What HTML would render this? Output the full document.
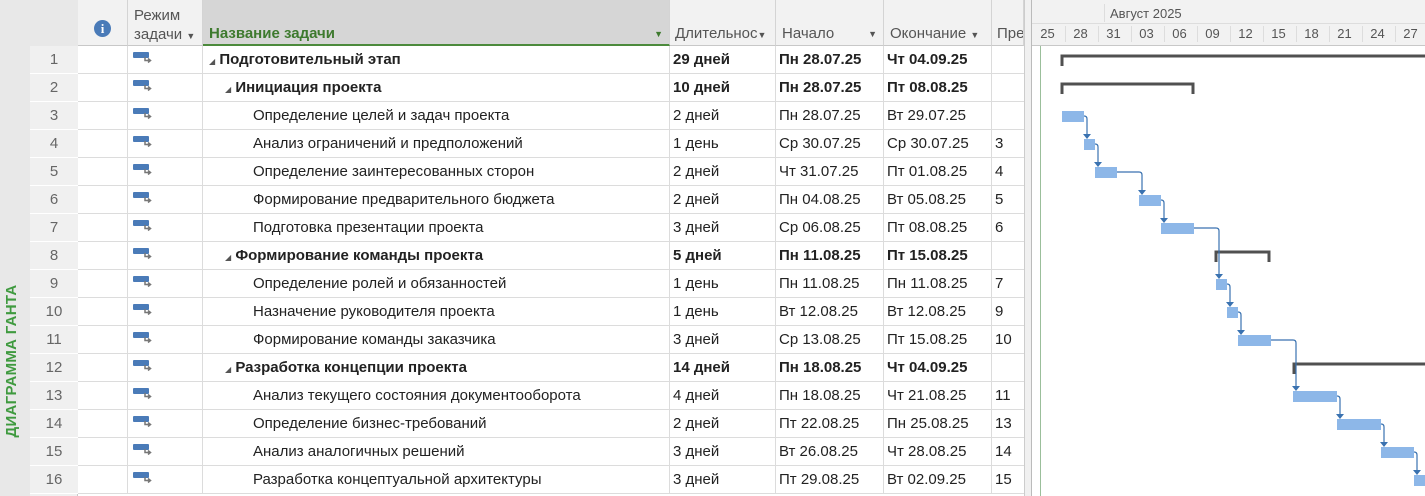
<!DOCTYPE html>
<html><head><meta charset="utf-8"><style>
*{margin:0;padding:0;box-sizing:border-box}
body{width:1425px;height:496px;overflow:hidden;background:#fff;font-family:"Liberation Sans","DejaVu Sans",sans-serif;font-size:15px;color:#222;position:relative}
.abs{position:absolute}
.hdr{position:absolute;top:0;height:46px;background:#f2f2f2;border-right:1px solid #d4d4d4;border-bottom:1px solid #c8c8c8;color:#555}
.row{position:absolute;left:78px;width:946px;height:28px;border-bottom:1px solid #dcdcdc}
.c{position:absolute;top:0;height:28px;line-height:27px;border-right:1px solid #dcdcdc;white-space:nowrap;overflow:hidden;padding-left:3px}
.b{font-weight:bold}
.num{position:absolute;left:30px;width:48px;height:28px;line-height:27px;text-align:center;color:#666;border-bottom:1px solid #fff;background:#f0f0f0}
.ico{position:absolute;left:133px}
</style></head><body>
<div class="abs" style="left:0;top:0;width:78px;height:496px;background:#e8e8e8"></div>
<div class="abs" style="left:30px;top:46px;width:48px;height:450px;background:#f0f0f0;border-right:1px solid #c8c8c8"></div>
<div class="abs" style="left:-66px;top:350px;width:160px;height:22px;transform:rotate(-90deg);color:#3f9a3f;font-weight:bold;font-size:15px;text-align:center;letter-spacing:0.3px">ДИАГРАММА ГАНТА</div>

<div class="hdr" style="left:78px;width:50px"><div class="abs" style="left:16px;top:20px;width:17px;height:17px;border-radius:50%;background:#4a7bb8;color:#fff;font-weight:bold;font-size:13px;text-align:center;line-height:17px;font-family:'Liberation Serif',serif">i</div></div>
<div class="hdr" style="left:128px;width:75px;padding:6px 0 0 6px;line-height:19px">Режим<br>задачи <span style="font-size:9px">▼</span></div>
<div class="hdr" style="left:203px;width:467px;background:#d6d6d6;border-bottom:2px solid #4c8a3c"><span class="abs" style="left:6px;top:25px;color:#3e7a2e;font-weight:bold">Название задачи</span><span class="abs" style="right:6px;top:29px;font-size:9px;color:#3e7a2e">▼</span></div>
<div class="hdr" style="left:670px;width:106px"><span class="abs" style="left:5px;top:25px">Длительнос<span style="font-size:9px">▼</span></span></div>
<div class="hdr" style="left:776px;width:108px"><span class="abs" style="left:6px;top:25px">Начало</span><span class="abs" style="right:6px;top:29px;font-size:9px">▼</span></div>
<div class="hdr" style="left:884px;width:108px"><span class="abs" style="left:6px;top:25px">Окончание <span style="font-size:9px">▼</span></span></div>
<div class="hdr" style="left:992px;width:32px;overflow:hidden"><span class="abs" style="left:5px;top:25px">Пре</span></div>
<div class="abs" style="left:1024px;top:0;width:8px;height:496px;background:#f0f0f0;border-left:1px solid #ccc;border-right:1px solid #bbb"></div>

<div class="abs" style="left:1032px;top:0;width:393px;height:46px;background:#f2f2f2;border-bottom:1px solid #c8c8c8;color:#555;font-size:13px">
<span class="abs" style="left:78px;top:6px">Август 2025</span>
<div class="abs" style="left:72px;top:4px;height:18px;border-left:1px solid #ddd"></div>
<div class="abs" style="left:0;top:23px;width:393px;border-top:1px solid #ddd"></div>
</div>
<div id="ticks"></div>
<div class="abs" style="left:1040px;top:46px;height:450px;border-left:1px solid #9bbf9b"></div>

<svg class="abs" style="left:0;top:0" width="1425" height="496" id="g"></svg>

<div id="rows"></div>
<script>
var d=[
["Подготовительный этап","29 дней","Пн 28.07.25","Чт 04.09.25","",1,0],
["Инициация проекта","10 дней","Пн 28.07.25","Пт 08.08.25","",1,1],
["Определение целей и задач проекта","2 дней","Пн 28.07.25","Вт 29.07.25","",0,2],
["Анализ ограничений и предположений","1 день","Ср 30.07.25","Ср 30.07.25","3",0,2],
["Определение заинтересованных сторон","2 дней","Чт 31.07.25","Пт 01.08.25","4",0,2],
["Формирование предварительного бюджета","2 дней","Пн 04.08.25","Вт 05.08.25","5",0,2],
["Подготовка презентации проекта","3 дней","Ср 06.08.25","Пт 08.08.25","6",0,2],
["Формирование команды проекта","5 дней","Пн 11.08.25","Пт 15.08.25","",1,1],
["Определение ролей и обязанностей","1 день","Пн 11.08.25","Пн 11.08.25","7",0,2],
["Назначение руководителя проекта","1 день","Вт 12.08.25","Вт 12.08.25","9",0,2],
["Формирование команды заказчика","3 дней","Ср 13.08.25","Пт 15.08.25","10",0,2],
["Разработка концепции проекта","14 дней","Пн 18.08.25","Чт 04.09.25","",1,1],
["Анализ текущего состояния документооборота","4 дней","Пн 18.08.25","Чт 21.08.25","11",0,2],
["Определение бизнес-требований","2 дней","Пт 22.08.25","Пн 25.08.25","13",0,2],
["Анализ аналогичных решений","3 дней","Вт 26.08.25","Чт 28.08.25","14",0,2],
["Разработка концептуальной архитектуры","3 дней","Пт 29.08.25","Вт 02.09.25","15",0,2]];
var h="";
d.forEach(function(r,i){
 var y=46+i*28,b=r[5]?" b":"";
 h+='<div class="num" style="top:'+y+'px">'+(i+1)+'</div>';
 h+='<div class="row" style="top:'+y+'px">';
 h+='<div class="c" style="left:0;width:50px"></div><div class="c" style="left:50px;width:75px"></div>';
 var ind=r[6]==0?6:r[6]==1?22:50;
 h+='<div class="c'+b+'" style="left:125px;width:467px;padding-left:'+ind+'px">'+(r[5]?'<span style="font-size:8px;color:#555;font-weight:normal">◢</span> ':'')+r[0]+'</div>';
 h+='<div class="c'+b+'" style="left:592px;width:106px">'+r[1]+'</div>';
 h+='<div class="c'+b+'" style="left:698px;width:108px">'+r[2]+'</div>';
 h+='<div class="c'+b+'" style="left:806px;width:108px">'+r[3]+'</div>';
 h+='<div class="c" style="left:914px;width:32px;border-right:none">'+r[4]+'</div></div>';
 h+='<svg class="ico" style="top:'+(y+6)+'px" width="20" height="13"><rect x="0" y="0" width="16" height="6" rx="1" fill="#4a7bb8"/><path d="M12 5V8.5H17M15 6.5L17.5 8.5L15 10.5" fill="none" stroke="#777" stroke-width="1.5"/></svg>';
});
document.getElementById('rows').innerHTML=h;
var t="",days=["25","28","31","03","06","09","12","15","18","21","24","27"];
days.forEach(function(s,i){var x=1032+i*33;t+='<span class="abs" style="left:'+(x+3)+'px;top:26px;width:25px;text-align:center;font-size:13px;color:#555">'+s+'</span><div class="abs" style="left:'+(x+33)+'px;top:26px;height:16px;border-left:1px solid #ddd"></div>'});
document.getElementById('ticks').innerHTML=t;
var s="";
function sum(i,x1,x2){var y=56+i*28;s+='<path d="M'+x1+' '+(y+10)+'V'+y+'H'+x2+(x2<1425?'V'+(y+10):'')+'" fill="none" stroke="#505050" stroke-width="3"/>'}
sum(0,1062,1430);sum(1,1062,1193);sum(7,1216,1269);sum(11,1294,1430);
var bars=[[2,1062,1084],[3,1084,1095],[4,1095,1117],[5,1139,1161],[6,1161,1194],[8,1216,1227],[9,1227,1238],[10,1238,1271],[12,1293,1337],[13,1337,1381],[14,1381,1414],[15,1414,1425]];
bars.forEach(function(b,k){var y=46+b[0]*28+9;s+='<rect x="'+b[1]+'" y="'+y+'" width="'+(b[2]-b[1])+'" height="11" fill="#8db7e8"/>';
 var nb=bars[k+1];if(nb){var ny=46+nb[0]*28+9,ax=nb[1]+3;s+='<path d="M'+b[2]+' '+(y+5)+'H'+(ax-3)+'Q'+ax+' '+(y+5)+' '+ax+' '+(y+8)+'V'+(ny-4)+'" fill="none" stroke="#3a72b0" stroke-width="1.2"/><path d="M'+(ax-4)+' '+(ny-5)+'H'+(ax+4)+'L'+ax+' '+ny+'Z" fill="#3a72b0"/>';}
});
document.getElementById('g').innerHTML=s;
</script>
</body></html>
